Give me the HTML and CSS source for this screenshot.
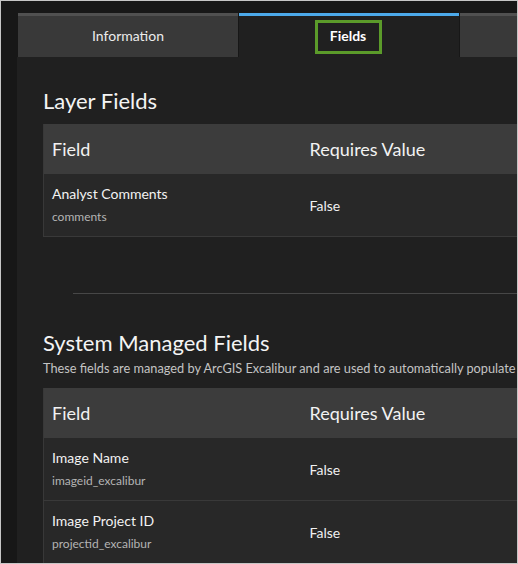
FILE: index.html
```html
<!DOCTYPE html>
<html>
<head>
<meta charset="utf-8">
<link rel="stylesheet" href="styles.css">
</head>
<body>
<div class="frame">
  <div class="tabs">
    <div class="tab">Information</div>
    <div class="tab active"><span class="focus">Fields</span></div>
    <div class="tab"></div>
  </div>
  <div class="panel">
    <h2 class="title">Layer Fields</h2>
    <table class="fields">
      <colgroup><col class="c1"><col class="c2"></colgroup>
      <thead><tr><th>Field</th><th>Requires Value</th></tr></thead>
      <tbody>
        <tr><td><div class="name">Analyst Comments</div><div class="key">comments</div></td><td>False</td></tr>
      </tbody>
    </table>
    <hr class="divider">
    <h2 class="title sys">System Managed Fields</h2>
    <p class="desc">These fields are managed by ArcGIS Excalibur and are used to automatically populate</p>
    <table class="fields">
      <colgroup><col class="c1"><col class="c2"></colgroup>
      <thead><tr><th>Field</th><th>Requires Value</th></tr></thead>
      <tbody>
        <tr><td><div class="name">Image Name</div><div class="key">imageid_excalibur</div></td><td>False</td></tr>
        <tr><td><div class="name">Image Project ID</div><div class="key">projectid_excalibur</div></td><td>False</td></tr>
      </tbody>
    </table>
  </div>
</div>
</body>
</html>
```

FILE: styles.css
```css
html, body {
  margin: 0;
  padding: 0;
  background: #181818;
}
.frame {
  box-sizing: border-box;
  width: 518px;
  height: 564px;
  border: 1px solid #c6c6c6;
  background: #171717;
  overflow: hidden;
  padding: 12px 0 0 16px;
  font-family: Lato, "Noto Sans", sans-serif;
  color: #f0f0f0;
}
.tabs {
  display: flex;
  width: 700px;
  height: 44px;
}
.tab {
  box-sizing: border-box;
  width: 220px;
  flex: none;
  margin-left: 1px;
  padding-bottom: 2px;
  background: #393939;
  border-top: 3px solid #505050;
  display: flex;
  align-items: center;
  justify-content: center;
  font-size: 14px;
  color: #ececec;
}
.tab.active {
  background: #202020;
  border-top-color: #4ca9ea;
  padding-bottom: 0;
  font-weight: 700;
  color: #fff;
}
.focus {
  box-sizing: border-box;
  width: 67px;
  height: 34px;
  padding-bottom: 2px;
  border: 3px solid #5b9b2a;
  display: flex;
  align-items: center;
  justify-content: center;
  margin-left: -2px;
}
.panel {
  background: #202020;
  width: 700px;
  height: 600px;
  padding: 0 0 0 26px;
  box-sizing: border-box;
}
.title {
  margin: 0;
  padding-top: 30px;
  font-size: 22px;
  font-weight: 400;
  line-height: 28px;
  color: #f4f4f4;
}
.fields {
  border-collapse: collapse;
  width: 620px;
  margin-top: 9px;
  table-layout: fixed;
  border-left: 1px solid #383838;
}
.c1 { width: 258px; }
.fields th {
  background: #3c3c3c;
  height: 50px;
  padding: 0 8px;
  text-align: left;
  font-size: 18px;
  font-weight: 400;
  color: #f2f2f2;
}
.fields td {
  background: #282828;
  height: 62px;
  padding: 0 8px;
  border-bottom: 1px solid #393939;
  font-size: 14px;
  color: #f0f0f0;
  vertical-align: middle;
}
.name {
  font-size: 14px;
  line-height: 18px;
  color: #f2f2f2;
}
.key {
  font-size: 12px;
  line-height: 16px;
  margin-top: 6px;
  color: #b4b4b4;
}
.divider {
  margin: 56px 0 0 30px;
  width: 600px;
  border: 0;
  border-top: 1px solid #474747;
  height: 0;
}
.title.sys {
  padding-top: 35px;
}
.desc {
  margin: 3px 0 0;
  font-size: 12.75px;
  line-height: 16px;
  color: #c4c4c4;
  white-space: nowrap;
}
.desc + .fields {
  margin-top: 12px;
}
```
